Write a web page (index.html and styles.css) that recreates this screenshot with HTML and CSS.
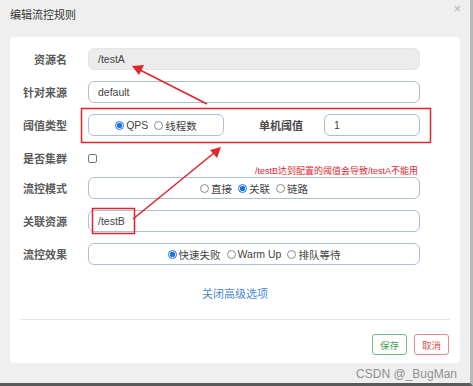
FILE: index.html
```html
<!DOCTYPE html>
<html lang="zh-CN">
<head>
    <meta charset="UTF-8">
    <title>编辑流控规则</title>
    <link rel="stylesheet" href="styles.css">
</head>
<body>
    <div class="dialog">
        <div class="dialog-header">
            <span class="dialog-title">编辑流控规则</span>
            <span class="close-btn">×</span>
        </div>
        <div class="card">
            <div class="form-row">
                <label class="form-label">资源名</label>
                <div class="form-input disabled">/testA</div>
            </div>
            <div class="form-row">
                <label class="form-label">针对来源</label>
                <div class="form-input">default</div>
            </div>
            <div class="form-row">
                <label class="form-label">阈值类型</label>
                <div class="form-input radios small">
                    <span class="radio checked"></span>QPS
                    <span class="radio"></span>线程数
                </div>
                <label class="form-label inline">单机阈值</label>
                <div class="form-input count">1</div>
            </div>
            <div class="form-row">
                <label class="form-label">是否集群</label>
                <span class="checkbox"></span>
            </div>
            <div class="hint">/testB达到配置的阈值会导致/testA不能用</div>
            <div class="form-row">
                <label class="form-label">流控模式</label>
                <div class="form-input radios">
                    <span class="radio"></span>直接
                    <span class="radio checked"></span>关联
                    <span class="radio"></span>链路
                </div>
            </div>
            <div class="form-row">
                <label class="form-label">关联资源</label>
                <div class="form-input">/testB</div>
            </div>
            <div class="form-row">
                <label class="form-label">流控效果</label>
                <div class="form-input radios">
                    <span class="radio checked"></span>快速失败
                    <span class="radio"></span>Warm Up
                    <span class="radio"></span>排队等待
                </div>
            </div>
            <div class="toggle-link">关闭高级选项</div>
            <div class="divider"></div>
            <div class="footer">
                <button class="btn save">保存</button>
                <button class="btn cancel">取消</button>
            </div>
        </div>
        <svg class="marks" width="473" height="386" viewBox="0 0 473 386">
            <rect x="81.5" y="108.5" width="349" height="34" fill="none" stroke="#e0262c" stroke-width="1.5"/>
            <rect x="92.5" y="208.5" width="42" height="25" fill="none" stroke="#e0262c" stroke-width="1.5"/>
            <line x1="207" y1="104" x2="140" y2="70" stroke="#e0262c" stroke-width="1.6"/>
            <polygon points="132,66 144,65 139,75" fill="#e0262c"/>
            <line x1="133" y1="219" x2="214" y2="153" stroke="#e0262c" stroke-width="1.6"/>
            <polygon points="221,147 217,158 210,150" fill="#e0262c"/>
        </svg>
        <div class="watermark">CSDN @_BugMan</div>
    </div>
</body>
</html>
```

FILE: styles.css
```css
html, body {
    margin: 0;
    padding: 0;
    background: #efefef;
    font-family: 'Liberation Sans', 'Noto Sans CJK SC', sans-serif;
    color: #333;
}
.dialog {
    position: relative;
    width: 470px;
    height: 383px;
    border-right: 3px solid #b8b8b8;
    border-bottom: 3px solid #5a5a5a;
    background: #efefef;
}
.dialog-header {
    height: 37px;
    display: flex;
    justify-content: space-between;
    align-items: flex-start;
    padding: 0 9px 0 10px;
    box-sizing: border-box;
}
.dialog-title {
    font-size: 11px;
    line-height: 11px;
    margin-top: 10px;
    color: #333;
}
.close-btn {
    font-size: 13px;
    line-height: 13px;
    margin-top: 2px;
    color: #b4b4b4;
}
.card {
    margin: 0 10px 0 10px;
    width: 450px;
    height: 326px;
    box-sizing: border-box;
    background: #fff;
    border-radius: 4px;
    padding: 11px 10px 10px 10px;
}
.form-row {
    display: flex;
    align-items: center;
    height: 22px;
    margin-bottom: 11px;
}
.form-label {
    width: 47px;
    text-align: right;
    font-size: 11px;
    font-weight: bold;
    color: #5b5b5b;
    margin-right: 21px;
    flex: none;
}
.form-label.inline {
    width: auto;
    margin: 0 0 0 auto;
    padding-right: 21px;
    color: #4a4a4a;
}
.form-input {
    width: 332px;
    height: 22px;
    box-sizing: border-box;
    border: 1px solid #aebfd5;
    border-radius: 6px;
    font-size: 10.5px;
    color: #444;
    display: flex;
    align-items: center;
    padding-left: 9px;
    flex: none;
}
.form-input.disabled {
    background: #ececec;
    border-color: #e6e6e6;
}
.form-input.small {
    width: 136px;
}
.form-input.count {
    width: 96px;
    margin-right: 0;
}
.form-row:nth-child(3) {
    width: 400px;
}
.radios {
    justify-content: center;
    padding-left: 0;
}
.radio {
    display: inline-block;
    width: 9px;
    height: 9px;
    box-sizing: border-box;
    border: 1px solid #8d8d8d;
    border-radius: 50%;
    margin: 0 2px 0 6px;
    background: #fff;
}
.radio:first-child {
    margin-left: 0;
}
.radio.checked {
    border: 1px solid #1a73e8;
    background: radial-gradient(circle, #1a73e8 0 2.5px, #fff 3px);
}
.checkbox {
    width: 9px;
    height: 9px;
    border: 1px solid #777;
    border-radius: 2px;
    box-sizing: border-box;
}
.form-row:nth-child(4) {
    margin-bottom: 0;
}
.hint {
    font-size: 9px;
    line-height: 12px;
    color: #e0262c;
    text-align: right;
    padding-right: 32px;
    margin-top: -4px;
    height: 12px;
}
.toggle-link {
    text-align: center;
    font-size: 11px;
    line-height: 12px;
    color: #4a8ad4;
    margin-top: 23px;
}
.divider {
    height: 1px;
    background: #e5e5e5;
    margin-top: 19px;
}
.footer {
    display: flex;
    justify-content: flex-end;
    gap: 7px;
    margin-top: 14px;
    padding-right: 1px;
}
.btn {
    width: 35px;
    height: 21px;
    font-family: inherit;
    font-size: 9.5px;
    background: #fff;
    border-radius: 3px;
    padding: 0;
}
.btn.save {
    border: 1px solid #6cbf7a;
    color: #3f9f4f;
}
.btn.cancel {
    border: 1px solid #e08a92;
    color: #d9534f;
}
.marks {
    position: absolute;
    left: 0;
    top: 0;
}
.watermark {
    position: absolute;
    right: 13px;
    bottom: 2px;
    font-size: 12px;
    color: #8f8f8f;
}
```
